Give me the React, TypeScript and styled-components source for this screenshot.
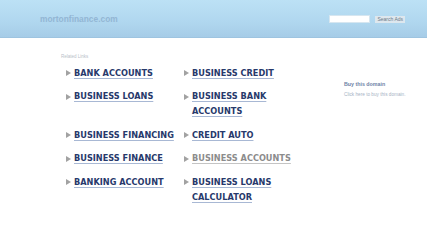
import styled, { createGlobalStyle } from 'styled-components';

const GlobalStyle = createGlobalStyle`
  html, body {
    margin: 0;
    padding: 0;
    background: #ffffff;
  }
  body {
    font-family: 'DejaVu Sans', 'Liberation Sans', sans-serif;
  }
`;

const links = [
  { label: 'BANK ACCOUNTS' },
  { label: 'BUSINESS CREDIT' },
  { label: 'BUSINESS LOANS' },
  { label: 'BUSINESS BANK ACCOUNTS' },
  { label: 'BUSINESS FINANCING' },
  { label: 'CREDIT AUTO' },
  { label: 'BUSINESS FINANCE' },
  { label: 'BUSINESS ACCOUNTS', visited: true },
  { label: 'BANKING ACCOUNT' },
  { label: 'BUSINESS LOANS CALCULATOR' },
];

const App = () => {
  return (
    <Page>
      <GlobalStyle />
      <Header>
        <DomainName>mortonfinance.com</DomainName>
        <SearchForm>
          <SearchInput type="text" />
          <SearchButton type="button">Search Ads</SearchButton>
        </SearchForm>
      </Header>
      <Main>
        <LinksArea>
          <SectionTitle>Related Links</SectionTitle>
          <LinkGrid>
            {links.map((link) => (
              <LinkItem key={link.label}>
                <Arrow />
                <LinkText href="#" $visited={link.visited}>
                  {link.label}
                </LinkText>
              </LinkItem>
            ))}
          </LinkGrid>
        </LinksArea>
        <Sidebar>
          <BuyTitle href="#">Buy this domain</BuyTitle>
          <BuyText>Click here to buy this domain.</BuyText>
        </Sidebar>
      </Main>
    </Page>
  );
};

const Page = styled.div`
  width: 427px;
  min-height: 243px;
`;

const Header = styled.header`
  height: 38px;
  box-sizing: border-box;
  display: flex;
  align-items: center;
  justify-content: space-between;
  padding: 1px 22px 0 40px;
  background: linear-gradient(to bottom, #bce1f5 0%, #b0d7ef 60%, #a6cce7 100%);
  border-bottom: 1px solid #9ec4e0;
`;

const DomainName = styled.span`
  font-family: 'Liberation Sans', Arial, sans-serif;
  font-weight: bold;
  font-size: 8.4px;
  color: #93b6d4;
`;

const SearchForm = styled.div`
  display: flex;
  align-items: center;
  gap: 5px;
`;

const SearchInput = styled.input`
  width: 39px;
  height: 6px;
  padding: 0;
  margin: 0;
  border: 1px solid #d6e6f0;
  background: #ffffff;
  outline: none;
`;

const SearchButton = styled.button`
  height: 7px;
  padding: 0 2px;
  margin: 0;
  border: none;
  background: #dde7ee;
  font-family: 'Liberation Sans', Arial, sans-serif;
  font-size: 5px;
  line-height: 7px;
  color: #6c7a88;
`;

const Main = styled.main`
  display: flex;
  align-items: flex-start;
`;

const LinksArea = styled.section`
  width: 241px;
  margin-left: 61px;
  padding-top: 16px;
`;

const SectionTitle = styled.div`
  font-family: 'Liberation Sans', Arial, sans-serif;
  font-size: 4.5px;
  line-height: 6px;
  color: #b8c0c8;
  margin-bottom: 5.5px;
`;

const LinkGrid = styled.div`
  display: grid;
  grid-template-columns: 118px 118px;
  row-gap: 8.5px;
  margin-left: 5px;
`;

const LinkItem = styled.div`
  display: flex;
  align-items: flex-start;
  gap: 3px;
`;

const Arrow = styled.span`
  flex: none;
  width: 0;
  height: 0;
  margin-top: 4.5px;
  border-top: 3px solid transparent;
  border-bottom: 3px solid transparent;
  border-left: 5px solid #a2a2a2;
`;

const LinkText = styled.a<{ $visited?: boolean }>`
  font-family: 'DejaVu Sans', sans-serif;
  font-weight: bold;
  font-size: 8.2px;
  line-height: 15px;
  color: ${(p) => (p.$visited ? '#8c8c8c' : '#27396b')};
  text-decoration: underline;
  text-decoration-color: ${(p) => (p.$visited ? '#c4c4c4' : '#a8b8d4')};
  text-underline-offset: 1.5px;
  max-width: 110px;
`;

const Sidebar = styled.aside`
  display: flex;
  flex-direction: column;
  gap: 4px;
  margin-left: 42px;
  padding-top: 43px;
`;

const BuyTitle = styled.a`
  font-family: 'Liberation Sans', Arial, sans-serif;
  font-weight: bold;
  font-size: 5.3px;
  line-height: 7px;
  color: #6d82a6;
  text-decoration: none;
`;

const BuyText = styled.span`
  font-family: 'Liberation Sans', Arial, sans-serif;
  font-size: 4.7px;
  line-height: 6px;
  color: #a6b2c4;
`;

export default App;
